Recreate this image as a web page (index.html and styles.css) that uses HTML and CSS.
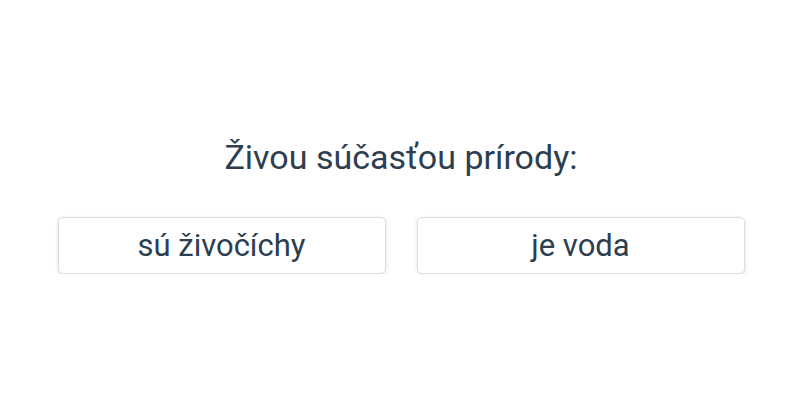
FILE: index.html
```html
<!DOCTYPE html>
<html lang="sk">
<head>
  <meta charset="UTF-8">
  <title>Otázka</title>
  <link rel="stylesheet" href="styles.css">
</head>
<body>
  <div class="quiz">
    <h1 class="question">Živou súčasťou prírody:</h1>
    <div class="answers">
      <button class="answer">sú živočíchy</button>
      <button class="answer">je voda</button>
    </div>
  </div>
</body>
</html>
```

FILE: styles.css
```css
body {
  margin: 0;
  background-color: #fff;
  font-family: Roboto, "Noto Sans", sans-serif;
  color: #2c3e50;
}

.quiz {
  width: 687px;
  margin: 0 auto;
  padding-top: 135px;
  padding-left: 2px;
}

.question {
  margin: 0 0 38px;
  font-size: 34px;
  font-weight: 400;
  line-height: 44px;
  text-align: center;
}

.answers {
  display: grid;
  grid-template-columns: 1fr 1fr;
  gap: 31px;
}

.answer {
  height: 57px;
  background: #fff;
  border: 1px solid #dedede;
  border-radius: 5px;
  box-shadow: 0 1px 4px rgba(0,0,0,0.12);
  font-family: inherit;
  font-size: 31px;
  padding-top: 1px;
  color: #2c3e50;
  cursor: pointer;
}
```
